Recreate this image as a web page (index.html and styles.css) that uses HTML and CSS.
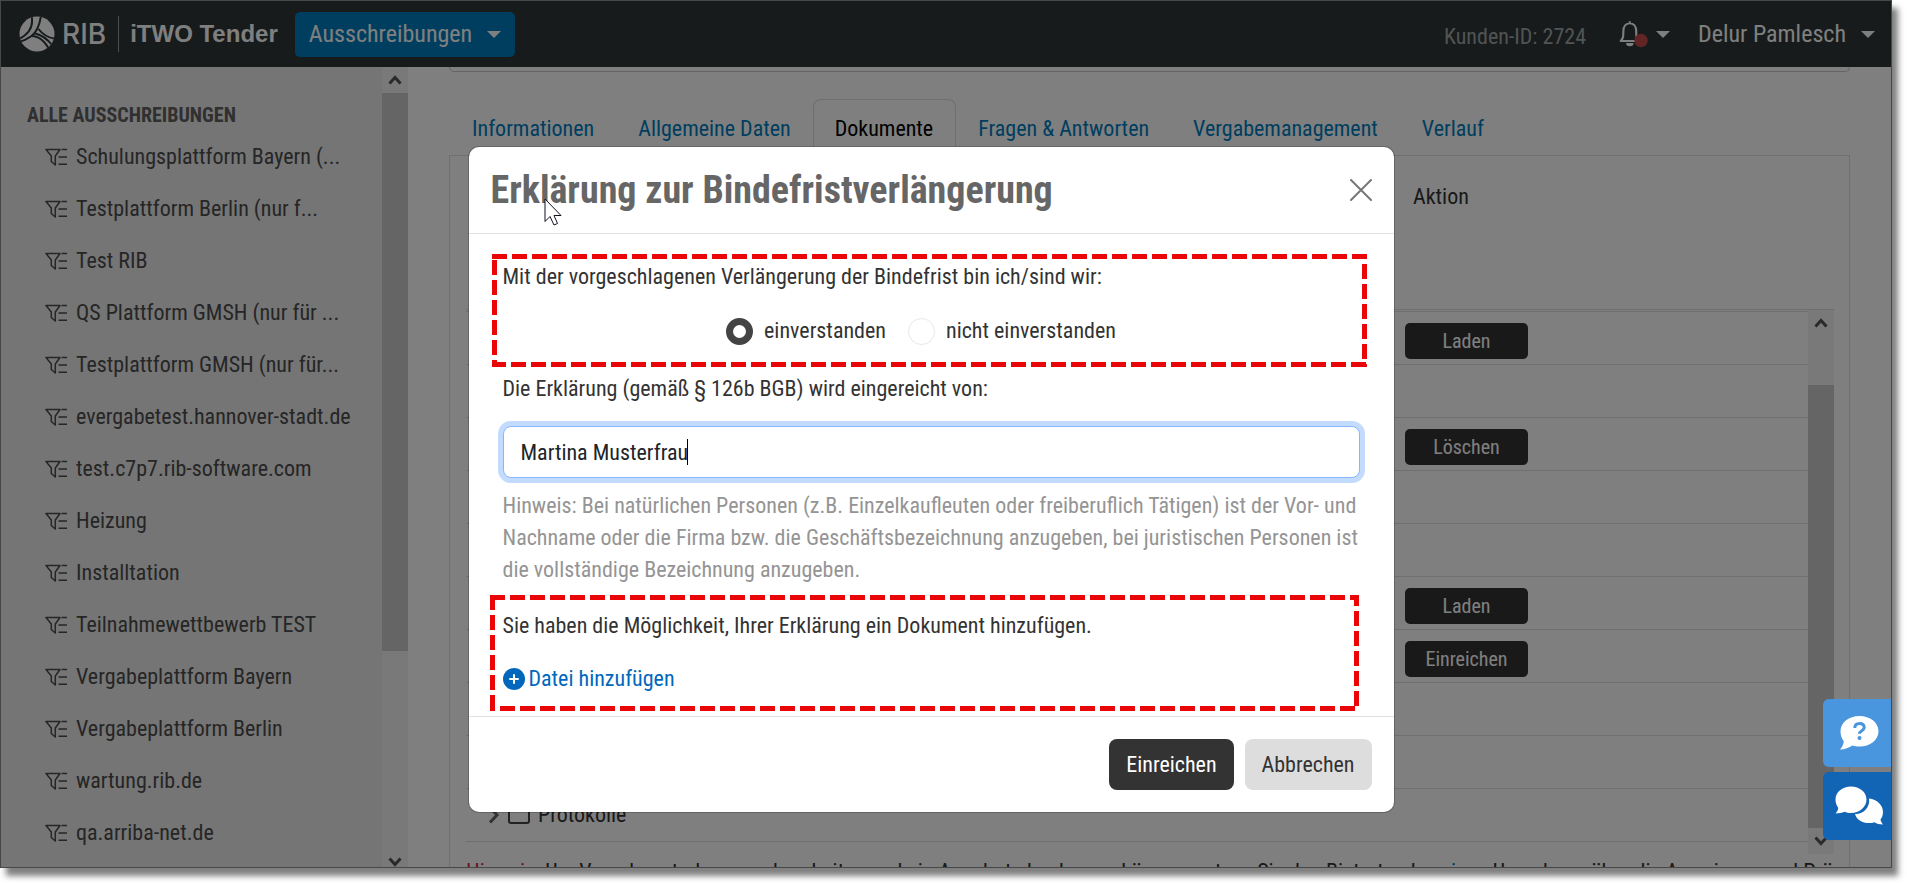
FILE: index.html
```html
<!DOCTYPE html>
<html lang="de">
<head>
<meta charset="utf-8">
<title>iTWO Tender – Erklärung zur Bindefristverlängerung</title>
<link rel="stylesheet" href="styles.css">
</head>
<body>
<svg width="0" height="0" class="defs" aria-hidden="true">
  <symbol id="filter" viewBox="0 0 22 18"><path d="M1 1.500h14L10.300 8v9L6.300 13.500V8zM16.500 1.500H22M13.500 9H22M13.500 16.200H22" fill="none" stroke="currentColor" stroke-width="1.500" stroke-linejoin="round"/></symbol>
  <symbol id="up" viewBox="0 0 14 10"><path d="M1.500 8.500 7 2.500l5.500 6" fill="none" stroke="currentColor" stroke-width="3"/></symbol>
  <symbol id="down" viewBox="0 0 14 10"><path d="M1.500 1.500 7 7.500l5.500-6" fill="none" stroke="currentColor" stroke-width="3"/></symbol>
</svg>
<div class="window">
  <header class="topbar">
    <div class="brand">
      <svg class="logo" viewBox="0 0 36 36" aria-hidden="true">
        <defs><clipPath id="disc"><circle cx="18" cy="18" r="17.500"/></clipPath></defs>
        <circle cx="18" cy="18" r="17.500" fill="#fff"/>
        <g clip-path="url(#disc)" fill="none" stroke="#2e3737">
          <path d="M12.500 0C14.500 9 12 17 0 23" stroke-width="2"/>
          <path d="M22 0C20.500 9 18 16 12.500 20 8 23 4 25 0 26" stroke-width="2"/>
          <path d="M19.500 13C24 19 30 22 37 23" stroke-width="2"/>
          <path d="M12.500 20C20 20 26 25 31 35" stroke-width="2"/>
          <path d="M16 17.500C24 19 30 25 34 30" stroke-width="2"/>
        </g>
      </svg>
      <span class="rib">RIB</span>
      <span class="product">iTWO Tender</span>
    </div>
    <button type="button" class="nav-button">Ausschreibungen<span class="caret"></span></button>
    <span class="customer">Kunden-ID: 2724</span>
    <button type="button" class="bell" aria-label="Benachrichtigungen">
      <svg width="30" height="30" viewBox="0 0 28 28" aria-hidden="true">
        <path d="M11 2v2M2.500 20.500C5 18 5 16 5 11.500 5 7 7.500 4 11 4s6 3 6 7.500c0 4.500 0 6.500 2.500 9z" fill="none" stroke="#fff" stroke-width="2" stroke-linejoin="round"/>
        <path d="M7.500 22.500h7a3.500 3 0 0 1-7 0z" fill="#fff"/>
        <circle cx="21.500" cy="20" r="6.300" fill="#c44a4a"/>
      </svg>
      <span class="caret"></span>
    </button>
    <button type="button" class="user">Delur Pamlesch<span class="caret"></span></button>
  </header>

  <div class="page">
    <aside class="sidebar">
      <nav class="tenders">
        <h2>ALLE AUSSCHREIBUNGEN</h2>
        <ul>
          <li><a href="#"><svg><use href="#filter"/></svg>Schulungsplattform Bayern (...</a></li>
          <li><a href="#"><svg><use href="#filter"/></svg>Testplattform Berlin (nur f...</a></li>
          <li><a href="#"><svg><use href="#filter"/></svg>Test RIB</a></li>
          <li><a href="#"><svg><use href="#filter"/></svg>QS Plattform GMSH (nur für ...</a></li>
          <li><a href="#"><svg><use href="#filter"/></svg>Testplattform GMSH (nur für...</a></li>
          <li><a href="#"><svg><use href="#filter"/></svg>evergabetest.hannover-stadt.de</a></li>
          <li><a href="#"><svg><use href="#filter"/></svg>test.c7p7.rib-software.com</a></li>
          <li><a href="#"><svg><use href="#filter"/></svg>Heizung</a></li>
          <li><a href="#"><svg><use href="#filter"/></svg>Installtation</a></li>
          <li><a href="#"><svg><use href="#filter"/></svg>Teilnahmewettbewerb TEST</a></li>
          <li><a href="#"><svg><use href="#filter"/></svg>Vergabeplattform Bayern</a></li>
          <li><a href="#"><svg><use href="#filter"/></svg>Vergabeplattform Berlin</a></li>
          <li><a href="#"><svg><use href="#filter"/></svg>wartung.rib.de</a></li>
          <li><a href="#"><svg><use href="#filter"/></svg>qa.arriba-net.de</a></li>
        </ul>
      </nav>
      <div class="scrollbar" aria-hidden="true">
        <svg class="arrow"><use href="#up"/></svg>
        <div class="track"><div class="thumb side-thumb"></div></div>
        <svg class="arrow low"><use href="#down"/></svg>
      </div>
    </aside>

    <main class="content">
      <div class="card-end"></div>
      <nav class="tabs">
        <a href="#">Informationen</a>
        <a href="#">Allgemeine Daten</a>
        <a href="#" class="active" aria-current="page">Dokumente</a>
        <a href="#">Fragen &amp; Antworten</a>
        <a href="#">Vergabemanagement</a>
        <a href="#">Verlauf</a>
      </nav>
      <section class="panel">
        <div class="panel-head"><span>Aktion</span></div>
        <div class="scroller">
          <div class="rows">
            <table>
              <tr><td></td><td class="action"><button type="button">Laden</button></td></tr>
              <tr><td></td><td class="action"></td></tr>
              <tr><td></td><td class="action"><button type="button">Löschen</button></td></tr>
              <tr><td></td><td class="action"></td></tr>
              <tr><td></td><td class="action"></td></tr>
              <tr><td></td><td class="action"><button type="button">Laden</button></td></tr>
              <tr><td></td><td class="action"><button type="button">Einreichen</button></td></tr>
              <tr><td></td><td class="action"></td></tr>
              <tr><td></td><td class="action"></td></tr>
              <tr><td><div class="folder">
                <svg width="12" height="18" viewBox="0 0 12 18" aria-hidden="true"><path d="M2 1.500 9 9l-7 7.500" fill="none" stroke="#666" stroke-width="3"/></svg>
                <svg width="22" height="18" viewBox="0 0 22 18" aria-hidden="true"><path d="M1 15V3q0-2 2-2h5l2 2h9q2 0 2 2v10q0 2-2 2H3q-2 0-2-2z" fill="none" stroke="#444" stroke-width="2"/></svg>
                Protokolle</div></td><td class="action"></td></tr>
            </table>
          </div>
          <div class="scrollbar" aria-hidden="true">
            <svg class="arrow"><use href="#up"/></svg>
            <div class="track"><div class="thumb table-thumb"></div></div>
            <svg class="arrow"><use href="#down"/></svg>
          </div>
        </div>
        <p class="note"><strong>Hinweis:</strong> Um Vergabeunterlagen zu bearbeiten und ein Angebot abgeben zu können, nutzen Sie den Bietertender, <a href="#">einen</a> Umgebung über die Anweisung und Prüf</p>
      </section>
    </main>
  </div>

  <div class="backdrop">
    <div class="modal" role="dialog" aria-labelledby="dialog-title">
      <header class="modal-head">
        <h1 id="dialog-title">Erklärung zur Bindefristverlängerung</h1>
        <button type="button" class="close" aria-label="Schließen">
          <svg width="22" height="22" viewBox="0 0 22 22" aria-hidden="true"><path d="M1 1l20 20M21 1 1 21" stroke="#777" stroke-width="2" stroke-linecap="round"/></svg>
        </button>
        <svg class="pointer" width="18" height="28" viewBox="0 0 18 28" aria-hidden="true"><path d="M1 1v22.500l5-5 4 8.500 3.500-1.500-3.500-8h7z" fill="#fff" stroke="#112" stroke-width="1"/></svg>
      </header>
      <form class="modal-body">
        <div class="marked consent" role="radiogroup" aria-labelledby="consent-text">
          <p id="consent-text">Mit der vorgeschlagenen Verlängerung der Bindefrist bin ich/sind wir:</p>
          <div class="choices">
            <label><input type="radio" name="consent" checked>einverstanden</label>
            <label><input type="radio" name="consent">nicht einverstanden</label>
          </div>
        </div>
        <label for="signer">Die Erklärung (gemäß § 126b BGB) wird eingereicht von:</label>
        <div class="signer-box">
          <input id="signer" type="text" value="Martina Musterfrau">
          <span class="text-caret"></span>
        </div>
        <p class="hint">Hinweis: Bei natürlichen Personen (z.B. Einzelkaufleuten oder freiberuflich Tätigen) ist der Vor- und Nachname oder die Firma bzw. die Geschäftsbezeichnung anzugeben, bei juristischen Personen ist die vollständige Bezeichnung anzugeben.</p>
        <div class="marked attach">
          <p>Sie haben die Möglichkeit, Ihrer Erklärung ein Dokument hinzufügen.</p>
          <a href="#" class="add-file">
            <svg width="22" height="22" viewBox="0 0 22 22" aria-hidden="true"><circle cx="11" cy="11" r="11" fill="#0067bd"/><path d="M11 7v8M7 11h8" stroke="#fff" stroke-width="2" stroke-linecap="round"/></svg>Datei hinzufügen</a>
        </div>
      </form>
      <footer class="modal-foot">
        <button type="button" class="primary">Einreichen</button>
        <button type="button" class="secondary">Abbrechen</button>
      </footer>
    </div>
  </div>

  <div class="helpers">
    <button type="button" class="help" aria-label="Hilfe">
      <svg width="40" height="36" viewBox="0 0 40 36" aria-hidden="true"><path d="M20.500 1C31 1 39.500 7.500 39.500 16.300S31 31.600 20.500 31.600c-2.500 0-5-.4-7-1C10 33 6 34.500 1 34.500c2-2 3.600-5 3.800-8.200C2.500 23.500 1.500 20 1.500 16.300 1.500 7.500 10 1 20.500 1z" fill="#fff"/><path d="M15.800 13c0-3 2-4.500 4.700-4.500 2.800 0 4.700 1.500 4.700 4 0 3.300-4.700 3.200-4.700 6.300" fill="none" stroke="#4a96de" stroke-width="3"/><circle cx="20.500" cy="23" r="2" fill="#4a96de"/></svg>
    </button>
    <button type="button" class="chat" aria-label="Chat">
      <svg width="48" height="40" viewBox="0 0 48 40" aria-hidden="true"><path d="M34 12.500c8 1 14 6.500 14 13.500 0 3-1 5.500-2.500 7.500.3 2 1.500 3.800 2.500 5-3.500 0-6.500-1-8.500-2.300-8 2.500-17.500-.5-19.500-8.200 8 .5 15.500-6.500 14-15.500z" fill="#fff"/><path d="M16 .5c8.500 0 15.500 5.500 15.500 13S24.500 27 16 27c-2.500 0-4.600-.4-6.500-1.200C7 27 4 27.500.5 27.500c1.500-1.500 2.500-3.500 2.800-5.500C1.500 19.500.5 16.500.5 13.500.5 6 7.500.5 16 .5z" fill="#fff"/></svg>
    </button>
  </div>
</div>
</body>
</html>
```
FILE: styles.css
```css
* { box-sizing: border-box; }

body {
  margin: 0;
  height: 100vh;
  padding: 0 15px 15px 0;
  background: #fff;
  color: #333;
  font: 22px/32px "Roboto Condensed", Roboto, sans-serif;
}

h1, h2, p, ul { margin: 0; padding: 0; }
button, input { font: inherit; }
button { border: 0; padding: 0; background: none; cursor: pointer; }
a { color: #007cbe; text-decoration: none; }
.defs { position: absolute; }

.window {
  position: relative;
  display: flex;
  flex-direction: column;
  height: 100%;
  border: 1px solid #484848;
  overflow: hidden;
  box-shadow: 6px 8px 6px rgba(0, 0, 0, .5);
}

/* top bar */
.topbar {
  flex: none;
  display: flex;
  align-items: center;
  height: 66px;
  padding: 0 16px 0 18px;
  background: #2e3737;
  color: #fff;
  font-size: 24px;
}
.brand { display: flex; align-items: center; height: 36px; margin-right: 17px; }
.logo { width: 36px; height: 36px; }
.rib { padding: 0 12px 0 7px; font: 500 28px/36px Inter, "Liberation Sans", sans-serif; border-right: 1px solid #9a9f9f; }
.product { padding-left: 11px; font: bold 24px/36px "Liberation Sans", sans-serif; }
.topbar button { display: flex; align-items: center; color: #fff; }
.topbar .nav-button { height: 45px; padding: 0 14px; gap: 15px; border-radius: 5px; background: #007cbe; }
.caret { border: 7px solid transparent; border-top-color: currentColor; border-bottom: 0; }
.customer { margin-left: auto; font-size: 22px; color: #a2a8a8; padding-top: 6px; }
.bell { margin-left: 32px; gap: 8px; }
.user { margin-left: 28px; gap: 15px; }

.page { flex: 1; display: flex; min-height: 0; isolation: isolate; }

/* sidebar */
.sidebar { flex: none; display: flex; width: 407px; background: #eaeaea; }
.tenders { flex: 1; padding-top: 32px; overflow: hidden; }
.tenders h2 { padding-left: 26px; font-size: 20px; line-height: 32px; color: #606060; }
.tenders ul { list-style: none; }
.tenders a { display: flex; align-items: center; gap: 9px; height: 52px; padding-left: 44px; color: #4c4c4c; white-space: nowrap; }
.tenders svg { flex: none; width: 22px; height: 18px; }

.scrollbar { flex: none; display: flex; flex-direction: column; align-items: center; width: 26px; background: #f2f2f2; color: #555; }
.arrow { flex: none; width: 14px; height: 10px; margin: 8px 0; }
.arrow.low { margin: 10px 0 0; }
.track { flex: 1; width: 100%; }
.thumb { background: #cacaca; }
.side-thumb { height: 74%; }
.table-thumb { height: 90%; margin-top: 49px; }

/* content */
.content { flex: 1; min-width: 0; padding: 0 41px; background: #fff; overflow: hidden; }
.card-end { height: 5px; border: 1px solid #c8c8c8; border-top: 0; border-radius: 0 0 5px 5px; }
.tabs { display: flex; margin-top: 27px; }
.tabs a { padding: 13px 21px 11px; border: 1px solid transparent; border-bottom: 0; }
.tabs a:first-child { padding-left: 22px; }
.tabs .active { position: relative; z-index: 1; padding: 13px 22px 11px 21px; background: #fff; color: #000; border-color: #dedede; border-radius: 8px 8px 0 0; }
.panel { margin-top: -1px; padding: 0 15px 0 16px; border: 1px solid #dedede; border-bottom: 0; }
.panel-head { display: grid; grid-template-columns: 1fr 421px; height: 153px; padding-top: 25px; }
.panel-head span { grid-column: 2; }
.scroller { display: flex; height: 545px; border-top: 1px solid #dedede; }
.rows { flex: 1; padding-top: 1px; }
.rows table { width: 100%; border-spacing: 0; border-bottom: 1px solid #dedede; }
.rows td { height: 53px; padding: 0; border-top: 1px solid #dedede; }
.rows .action { width: 403px; }
.action button { display: block; width: 123px; margin-top: 5px; line-height: 36px; border-radius: 5px; background: #333; color: #fff; font-size: 20px; }
.folder { display: flex; align-items: center; gap: 8px; padding-left: 22px; }
.note { padding-top: 2px; overflow: hidden; white-space: nowrap; }
.note strong { font-weight: 400; color: #d9303a; }

/* dialog */
.backdrop { position: absolute; inset: 0; padding: 146px 30px 0 0; background: rgba(0, 0, 0, .5); }
.modal { width: 925px; margin: 0 auto; border-radius: 10px; background: #fff; box-shadow: 0 0 0 1px rgba(0, 0, 0, .2); }
.modal-head { position: relative; display: flex; align-items: center; justify-content: space-between; height: 87px; padding: 0 22px; border-bottom: 1px solid #dee2e6; }
.modal-head h1 { font-size: 38px; line-height: 48px; color: #666; }
.close { display: flex; }
.pointer { position: absolute; left: 75px; top: 51px; }
.modal-body { padding: 27px 34px 21px; }
.modal-body > label { display: block; }

.consent { margin-bottom: 26px; }
.choices { display: flex; justify-content: center; gap: 22px; margin-top: 22px; padding-right: 20px; }
.choices label { display: flex; align-items: center; gap: 11px; }
.choices input { appearance: none; width: 27px; height: 27px; margin: 0; border: 1px solid #e4e7ea; border-radius: 50%; background: #fff; }
.choices input:checked { border: 7px solid #444; }

.signer-box { position: relative; margin-top: 21px; }
.signer-box input {
  display: block;
  width: 100%;
  height: 52px;
  padding: 0 17px;
  border: 1px solid #86b7fe;
  border-radius: 8px;
  outline: 0;
  color: #212529;
  box-shadow: 0 0 0 5px #c2dbfe;
}
.text-caret { position: absolute; left: 184px; top: 13px; width: 1px; height: 26px; background: #000; }
.hint { margin-top: 12px; color: #949494; }
.attach { margin-top: 24px; }
.add-file { display: flex; align-items: center; gap: 4px; margin-top: 21px; color: #0067bd; }

/* red dashed frames around the highlighted sections */
.marked { position: relative; }
.marked::after {
  content: "";
  position: absolute;
  pointer-events: none;
  --across: linear-gradient(90deg, #ea0606 15px, transparent 15px);
  --along: linear-gradient(#ea0606 15px, transparent 15px);
  background-image: var(--across), var(--across), var(--along), var(--along);
  background-size: 20px 5px, 20px 5px, 5px 20px, 5px 20px;
  background-repeat: repeat-x, repeat-x, repeat-y, repeat-y;
}
.consent::after { inset: -7px -7px -20px -11px; background-position: 0 0, -1px 100%, 0 6px, 100% 10px; }
.attach::after { inset: -15px 1px -16px -13px; background-position: 0 0, 10px 100%, 0 0, 100% -4px; }

.modal-foot { display: flex; justify-content: flex-end; gap: 11px; padding: 22px; border-top: 1px solid #dee2e6; }
.modal-foot button { height: 51px; padding: 0 17px; border-radius: 8px; }
.primary { background: #333; color: #fff; }
.secondary { background: #ddd; color: #333; }

/* floating help and chat buttons */
.helpers { position: absolute; right: 0; bottom: 27px; display: grid; gap: 5px; }
.helpers button { display: grid; place-items: center; width: 68px; height: 68px; padding-left: 3px; border-radius: 6px 0 0 6px; }
.help { background: #4a96de; }
.chat { background: #1264b5; }
```
